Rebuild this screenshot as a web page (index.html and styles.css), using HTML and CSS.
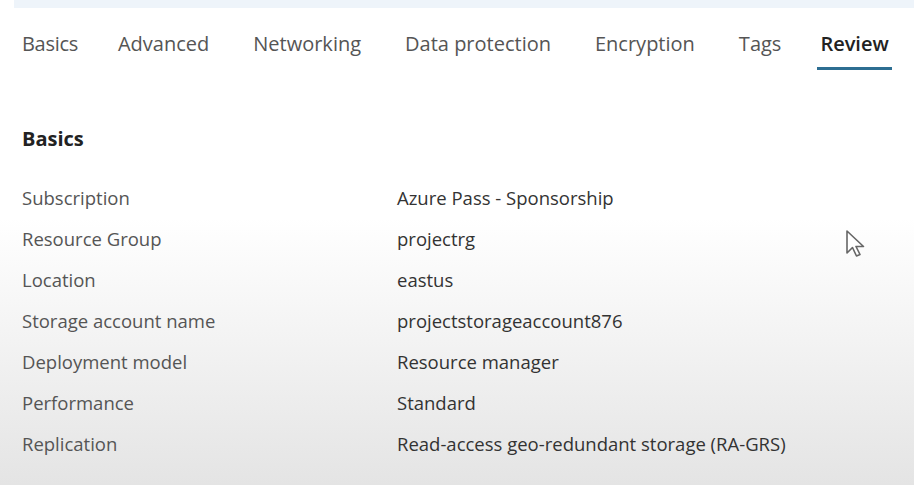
FILE: index.html
```html
<!DOCTYPE html>
<html lang="en">
<head>
  <meta charset="UTF-8">
  <title>Create storage account - Review</title>
  <link rel="stylesheet" href="styles.css">
</head>
<body>

  <div class="topstrip"></div>

  <div class="tabs">
    <span class="tab">Basics</span>
    <span class="tab">Advanced</span>
    <span class="tab">Networking</span>
    <span class="tab">Data protection</span>
    <span class="tab">Encryption</span>
    <span class="tab">Tags</span>
    <span class="tab active">Review</span>
  </div>

  <div class="section">
    <h2>Basics</h2>

    <div class="row"><span class="label">Subscription</span><span class="value">Azure Pass - Sponsorship</span></div>
    <div class="row"><span class="label">Resource Group</span><span class="value">projectrg</span></div>
    <div class="row"><span class="label">Location</span><span class="value">eastus</span></div>
    <div class="row"><span class="label">Storage account name</span><span class="value">projectstorageaccount876</span></div>
    <div class="row"><span class="label">Deployment model</span><span class="value">Resource manager</span></div>
    <div class="row"><span class="label">Performance</span><span class="value">Standard</span></div>
    <div class="row"><span class="label">Replication</span><span class="value">Read-access geo-redundant storage (RA-GRS)</span></div>
  </div>

  <svg class="cursor" width="22" height="30" viewBox="0 0 22 30">
    <path d="M2 2 L2 24 L7.5 18.5 L11.5 27 L15 25.5 L11 17.5 L18.5 17.5 Z" fill="#fff" stroke="#666" stroke-width="1.6" stroke-linejoin="round"/>
  </svg>

</body>
</html>
```

FILE: styles.css
```css
html, body {
  height: 100%;
}
body {
  margin: 0;
  font-family: "Open Sans", "Noto Sans", sans-serif;
  color: #333;
  background: linear-gradient(to bottom, #ffffff 0%, #ffffff 45%, #f3f3f3 70%, #e4e4e4 100%);
  position: relative;
  overflow: hidden;
}
.topstrip {
  height: 8px;
  margin-left: 14px;
  background-color: #eef4fa;
}
.tabs {
  display: flex;
  gap: 44px;
  padding: 22px 0 0 22px;
}
.tab {
  font-size: 20px;
  line-height: 27px;
  color: #555;
  padding-bottom: 10px;
  border-bottom: 3px solid transparent;
}
.tab:first-child {
  letter-spacing: -0.3px;
  margin-right: -4px;
}
.tab.active {
  color: #222;
  font-weight: 600;
  margin-left: -8px;
  padding: 0 3px 10px;
  border-bottom-color: #2d6e92;
}
.section {
  padding: 55px 0 0 22px;
}
h2 {
  font-size: 20px;
  line-height: 27px;
  font-weight: 700;
  color: #222;
  margin: 0 0 33px;
}
.row {
  display: flex;
  height: 41px;
  align-items: flex-start;
  font-size: 18.5px;
  line-height: 25px;
}
.label {
  width: 375px;
  color: #555;
}
.value {
  color: #333;
}
.cursor {
  position: absolute;
  left: 845px;
  top: 229px;
}
```
